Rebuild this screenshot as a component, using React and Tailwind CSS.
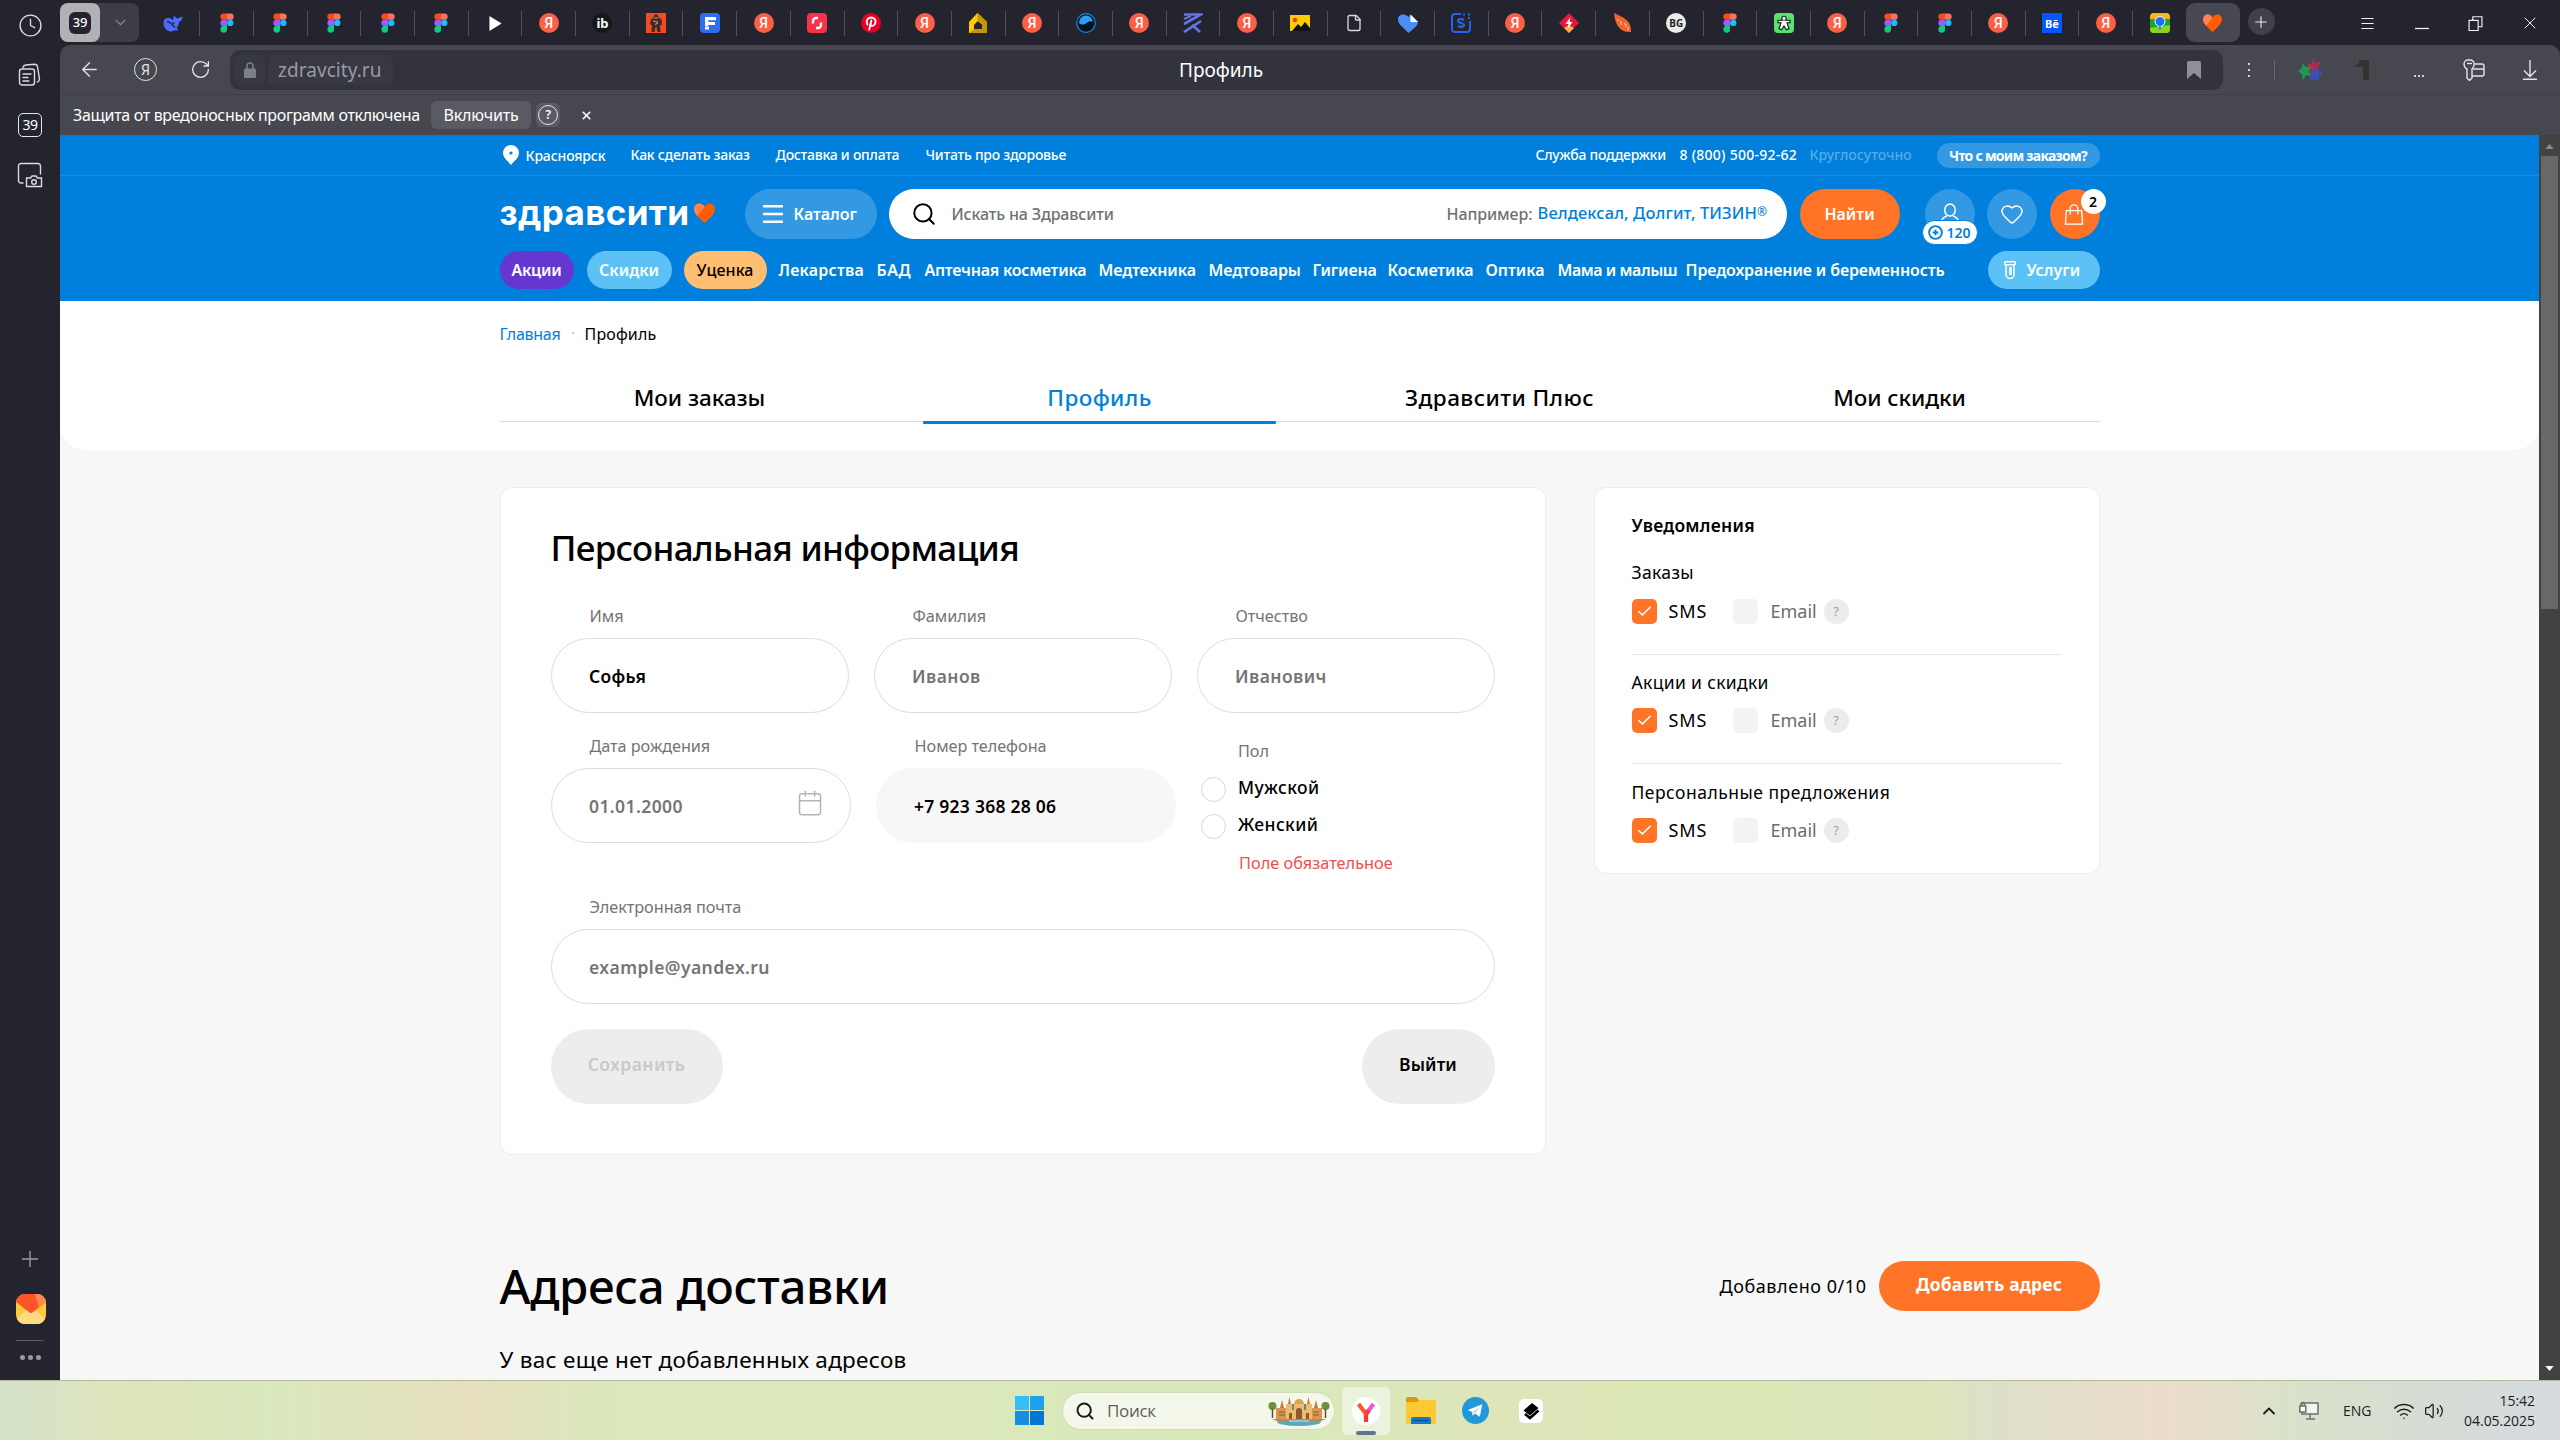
import React from "react";
import {
  Clock, ChevronDown, ChevronUp, ArrowLeft, RotateCw, Plus, X, Menu, Heart, User, Search,
  Calendar, Check, Wifi, Volume2, File,
} from "lucide-react";

/* ---------- tab icons ---------- */

const Figma = () => (
  <svg viewBox="0 0 14 20" className="h-[20px] w-[14px]">
    <path d="M3.5 0.5H7v6.3H3.5a3.15 3.15 0 0 1 0-6.3z" fill="#f24e1e" />
    <path d="M7 0.5h3.5a3.15 3.15 0 0 1 0 6.3H7z" fill="#ff7262" />
    <path d="M3.5 6.8H7v6.3H3.5a3.15 3.15 0 0 1 0-6.3z" fill="#a259ff" />
    <circle cx="10.3" cy="9.95" r="3.15" fill="#1abcfe" />
    <path d="M3.5 13.1H7v3.2a3.3 3.3 0 1 1-3.5-3.2z" fill="#0acf83" />
  </svg>
);

const Ya = () => (
  <div className="flex size-[20px] items-center justify-center rounded-full bg-[#fc5f48] font-['Roboto',sans-serif] text-[14px] leading-none font-medium text-white">
    Я
  </div>
);

const Badge = ({ className, children }) => (
  <div className={"flex size-[20px] items-center justify-center leading-none font-bold " + className}>{children}</div>
);

const HeartShape = ({ className, main, light }) => (
  <svg viewBox="0 0 24 22" className={className}>
    <path d="M12 22C7 17 .5 12.500.5 6.500.5 3 3 .5 6.200.5 8.800.5 11 2 12 4.500 13 2 15.200.5 17.800.5c3.200 0 5.700 2.500 5.700 6C23.500 12.500 17 17 12 22z" fill={main} />
    <path d="M4.200 14C2 11.800.5 9.500.5 6.500.5 3 3 .5 6.200.5 8.800.5 11 2 12 4.500z" fill={light} />
  </svg>
);

const Whale = () => (
  <svg viewBox="0 0 20 17" className="h-[17px] w-[20px]">
    <path d="M.5 8C.5 4.500 3 2.500 6 3c1.500.3 2.500 1.300 4 2 .5-2 .3-3.500 1.500-4.500C12 2 13 3 14.500 3.500 16 2.500 18 2.500 19.500 1.500 19.500 4.500 18 6.500 16 7c-.2 2.500-1 4.500-2.500 6l2 2c-1.500.8-3 .5-4 .2C9 16.800 6.500 16.800 4.500 15.500 1.800 14 .5 11 .5 8z" fill="#4d6bfe" />
    <path d="M4 6.500c3 .3 5.500 3 8 6" fill="none" stroke="#23242e" strokeWidth="1.300" /><circle cx="10.500" cy="8" r="1.100" fill="#23242e" />
  </svg>
);

const Play = () => (
  <svg viewBox="0 0 13 16" className="h-[15px] w-[13px]"><path d="M0 0l13 8-13 8z" fill="#fff" /></svg>
);

const Robot = () => (
  <svg viewBox="0 0 20 20" className="size-[20px]">
    <rect width="20" height="20" fill="#f54a23" />
    <path d="M8.500 1.500h3l1 3 3 2 .5 5-2 1 .5 6.500h-3l-1-5h-1l-1 5h-3L6 12.500 4 11l1-4.500 2.500-2z" fill="#3d2b25" />
    <path d="M8 5h4M7 8l5 1M9 11.500l3-1.500" stroke="#c9a15c" strokeWidth="1.200" />
  </svg>
);

const FBox = () => (
  <svg viewBox="0 0 20 20" className="size-[20px]">
    <rect width="20" height="20" rx="4" fill="#2f6df0" />
    <rect x="5" y="4" width="11" height="3.200" fill="#fff" /><rect x="5" y="4" width="3.300" height="9" fill="#fff" />
    <rect x="5" y="9" width="10" height="3" fill="#fff" /><rect x="5" y="13.500" width="4" height="3" fill="#fff" />
  </svg>
);

const RedLoop = () => (
  <svg viewBox="0 0 20 20" className="size-[20px]">
    <rect width="20" height="20" rx="4" fill="#fb3049" />
    <path d="M11 5H9a3 3 0 0 0-3 3v2.500M9 15h2a3 3 0 0 0 3-3V9.500" fill="none" stroke="#fff" strokeWidth="2.400" />
  </svg>
);

const Pin = () => (
  <svg viewBox="0 0 20 20" className="size-[20px]">
    <circle cx="10" cy="10" r="10" fill="#e60023" />
    <path d="M6.500 11.500C4.500 8 6.500 4.500 10.200 4.500c3 0 4.600 2 4.300 4.500-.3 2.500-2 4-3.700 3.800-1-.1-1.600-.8-1.600-.8M10.400 7.500L8.200 16.500" fill="none" stroke="#fff" strokeWidth="1.900" strokeLinecap="round" />
  </svg>
);

const House = () => (
  <svg viewBox="0 0 20 20" className="size-[20px]">
    <path d="M1 20V9l8.500-9 9.500 9v11h-4.500v-8l-4.700-4L6 12v8z" fill="#ffcc00" />
    <path d="M9.500 0l9.500 9v11H1l5-4h8v-5l-4.500-4z" fill="#c79500" />
  </svg>
);

const Wave = () => (
  <svg viewBox="0 0 20 20" className="size-[20px]">
    <circle cx="10" cy="10" r="9.300" fill="#06121f" stroke="#1489e6" strokeWidth="1.200" />
    <path d="M3 10a7 7 0 0 1 14-1c-3-2-5 0-7 1.500S5 12 3 10z" fill="#2b9df4" />
  </svg>
);

const Zed = () => (
  <svg viewBox="0 0 20 20" className="size-[20px]" fill="none" stroke="#6673e8" strokeWidth="2.600">
    <path d="M1 1.500h17L1 11" /><path d="M1 19L18 8" /><path d="M9 12l8 7" /><path d="M1 6l7-3" strokeWidth="2" />
  </svg>
);

const Picture = () => (
  <svg viewBox="0 0 20 16" className="h-[16px] w-[20px]">
    <rect width="20" height="16" fill="#ffcc00" />
    <path d="M2 16l6-7 3 3 4-5 5 6v3z" fill="#111" /><circle cx="5" cy="5" r="2.200" fill="#f33" />
  </svg>
);

const HeartFile = () => (
  <svg viewBox="0 0 20 19" className="h-[19px] w-[20px]">
    <path d="M10.500 19C6 14 0 10.500 0 5.500 0 2.500 2.200.5 5 .5c2.500 0 4 1 5.500 2.500L12.500.5 20 8c0 4-5 7-9.500 11z" fill="#4b8ef7" />
    <path d="M12.500.5L20 8h-7.500z" fill="#fff" />
  </svg>
);

const SBlue = () => (
  <svg viewBox="0 0 20 20" className="size-[20px]" fill="none" stroke="#2563eb" strokeWidth="2">
    <path d="M10 1H4a3 3 0 0 0-3 3v12a3 3 0 0 0 3 3h12a3 3 0 0 0 3-3V8" />
    <path d="M13 7c-2-1.500-6-1-6 1s6 2 6 4-4 2.500-6 1" strokeWidth="2.200" /><path d="M12 1.500h2M17 1.500h2M17 5h2" />
  </svg>
);

const Diamond = () => (
  <svg viewBox="0 0 20 20" className="size-[20px]">
    <path d="M10 0l10 10-10 10L0 10z" fill="#e5173f" /><path d="M10 20l-5-5 5-3 5 3z" fill="#ffb03a" />
    <path d="M11.500 4L6.500 11h3l-1 5 5-7h-3z" fill="#fff" />
  </svg>
);

const Feather = () => (
  <svg viewBox="0 0 20 20" className="size-[20px]">
    <path d="M1 0c8 4 18 7 17 19C8 20 2 13 1 0z" fill="#f2642c" />
    <path d="M4 6l1.500 2M8 8v4M11 11h2v3M15 14v3" stroke="#fff" strokeOpacity=".7" strokeWidth="1" fill="none" />
  </svg>
);

const Person = () => (
  <svg viewBox="0 0 20 20" className="size-[20px]">
    <rect width="20" height="20" rx="4" fill="#54e56d" />
    <path d="M10 3.200a2.200 2.200 0 0 1 1.300 4H16v2.600h-3l2 6-2.600 1L10 13l-2.400 3.800-2.600-1 2-6H4V7.200h4.700a2.200 2.200 0 0 1 1.300-4z" fill="#fff" stroke="#111" strokeWidth="1.100" />
  </svg>
);

const MapIcon = () => (
  <svg viewBox="0 0 20 20" className="size-[20px]">
    <rect width="20" height="20" rx="4" fill="#15a82b" /><path d="M0 6V4a4 4 0 0 1 4-4h12a4 4 0 0 1 4 4v2z" fill="#ffb319" />
    <path d="M0 15l20-3v4a4 4 0 0 1-4 4H4a4 4 0 0 1-4-4z" fill="#8bd61c" />
    <circle cx="10" cy="8.500" r="5" fill="#1a73ff" stroke="#fff" strokeWidth="1" /><path d="M10 13v4" stroke="#1a73ff" strokeWidth="1.500" />
  </svg>
);

const tabs = [
  Whale, Figma, Figma, Figma, Figma, Figma, Play, Ya,
  () => <Badge className="rounded-full bg-[#171717] text-[13px] text-white">ib</Badge>,
  Robot, FBox, Ya, RedLoop, Pin, Ya, House, Ya, Wave, Ya, Zed, Ya, Picture,
  () => <File className="h-[20px] w-[18px] text-[#d8d8dc]" strokeWidth={1.800} />,
  HeartFile, SBlue, Ya, Diamond, Feather,
  () => <Badge className="rounded-full bg-[#ececec] text-[10px] text-[#222]">BG</Badge>,
  Figma, Person, Ya, Figma, Figma, Ya,
  () => <Badge className="bg-[#0057ff] text-[11px] text-white">Bē</Badge>,
  Ya, MapIcon,
];

/* ---------- browser chrome ---------- */

function SideRail() {
  return (
    <aside className="flex h-full w-[60px] shrink-0 flex-col items-center bg-[#23242e] text-[#dcdce0]">
      <Clock className="mt-[13px] size-[25px]" strokeWidth={1.300} />
      <svg viewBox="0 0 24 24" className="mt-[25px] size-[24px]" fill="none" stroke="currentColor" strokeWidth="1.400" strokeLinejoin="round" strokeLinecap="round">
        <rect x="1.500" y="6" width="15" height="16" rx="2.500" /><path d="M5 4.500C5.200 3 6 2.300 7.500 2l9-.8c2 0 2.800 1 3 2.500L21.500 16c0 1.800-.7 2.500-2 3" /><path d="M5 11h8M5 14.500h5M5 18h6" />
      </svg>
      <div className="mt-[26px] flex size-[24px] items-center justify-center rounded-[5px] border-[1.5px] border-[#e6e6ea] font-['Noto_Sans',sans-serif] text-[14px] leading-none tracking-[-0.5px] text-white">39</div>
      <svg viewBox="0 0 26 26" className="mt-[25px] size-[26px]" fill="none" stroke="currentColor" strokeWidth="1.400" strokeLinejoin="round" strokeLinecap="round">
        <path d="M6 21H4a2.500 2.500 0 0 1-2.500-2.500V4A2.500 2.500 0 0 1 4 1.500h17A2.500 2.500 0 0 1 23.500 4v8" /><path d="M9.500 16h4l1.500-2h4l1.500 2h4v8.500h-15z" /><circle cx="17" cy="20" r="2.300" />
      </svg>
      <div className="flex-1" />
      <Plus className="size-[26px] text-[#9a9aa2]" strokeWidth={1.300} />
      <svg viewBox="0 0 30 30" className="mt-[22px] ml-px size-[30px]">
        <rect width="30" height="30" rx="9" fill="#ffcb3d" />
        <path d="M1 25l9.500-9.500L15 19l4.500-3.500L29 25a9 9 0 0 1-8 5H9a9 9 0 0 1-8-5z" fill="#ffdc80" />
        <path d="M0 8a9 9 0 0 1 9-8h12a9 9 0 0 1 9 8L16.500 18.500q-1.500 1-3 0z" fill="#ff5527" /><path d="M19 0h2a9 9 0 0 1 9 8l-7 5.500z" fill="#ff8a50" />
      </svg>
      <div className="mt-[16px] h-px w-[28px] bg-[#5b5c66]" />
      <div className="mt-[14px] mb-[20px] flex gap-[3px]">
        <i className="size-[5px] rounded-full bg-[#9a9aa2]" /><i className="size-[5px] rounded-full bg-[#9a9aa2]" /><i className="size-[5px] rounded-full bg-[#9a9aa2]" />
      </div>
    </aside>
  );
}

function TabStrip() {
  return (
    <div className="flex h-[45px] items-start bg-[#23242e] pt-[3px]">
      <div className="flex h-[39px] w-[79px] items-center rounded-[8px] bg-[#3c3d47]">
        <div className="flex h-full w-[40px] items-center justify-center rounded-[8px] bg-[#b1b1b6]">
          <div className="flex h-[22px] w-[22px] items-center justify-center rounded-[6px] bg-[#23242e] font-['Noto_Sans',sans-serif] text-[13px] leading-none font-medium tracking-[-0.3px] text-white">39</div>
        </div>
        <ChevronDown className="ml-[12px] size-[17px] text-[#8d8e97]" strokeWidth={1.800} />
      </div>
      <div className="ml-[7.600px] flex">
        {tabs.map((Icon, i) => (
          <div key={i} className="flex h-[40px] w-[53.700px] items-center">
            <div className="flex flex-1 justify-center"><Icon /></div>
            {i < tabs.length - 1 && <div className="h-[25px] w-px bg-[#50515b]" />}
          </div>
        ))}
      </div>
      <div className="-ml-px flex h-[39px] w-[54px] items-center justify-center rounded-[9px] bg-[#474852]">
        <HeartShape className="h-[18px] w-[21px]" main="#ff5c05" light="#ff8355" />
      </div>
      <div className="mt-[5px] ml-[8px] flex size-[27px] items-center justify-center rounded-full bg-[#3f404a]">
        <Plus className="size-[18px] text-[#ececf0]" strokeWidth={1.500} />
      </div>
      <div className="ml-auto flex h-[40px] items-center text-[#f0f0f2]">
        <Menu className="mr-[39px] size-[17px]" strokeWidth={1.500} />
        <svg viewBox="0 0 14 14" className="mr-[39px] size-[14px]"><path d="M0 12.500h14" stroke="currentColor" strokeWidth="1.300" /></svg>
        <svg viewBox="0 0 14 14" className="mr-[37px] size-[15px]" fill="none" stroke="currentColor" strokeWidth="1.100"><path d="M1 4h8.500v9.500H1zM4.500 4V.7H13V10H9.500" /></svg>
        <X className="mr-[20px] size-[20px]" strokeWidth={1.200} />
      </div>
    </div>
  );
}

function Toolbar() {
  return (
    <div className="flex h-[50px] items-center rounded-t-[10px] border-b border-[#3e3e48] bg-[#474750] text-[#e4e4e8]">
      <ArrowLeft className="ml-[18px] size-[23px]" strokeWidth={1.400} />
      <div className="ml-[33px] flex size-[23px] items-center justify-center rounded-full border-[1.500px] border-[#e4e4e8] font-['Roboto',sans-serif] text-[14px] leading-none">Я</div>
      <RotateCw className="ml-[33px] size-[21px]" strokeWidth={1.500} />
      <div className="ml-[19px] flex h-[40px] w-[1993px] items-center rounded-[10px] bg-[#33333d] pl-[5px] text-[19px]">
        <div className="flex h-[30px] w-[30px] items-center justify-center rounded-[6px] bg-[#373842]">
          <svg viewBox="0 0 12 16" className="h-[16px] w-[12px]"><path d="M3 7V4a3 3 0 0 1 6 0v3" fill="none" stroke="#7c8088" strokeWidth="1.500" /><rect y="6.500" width="12" height="9.500" rx="1.500" fill="#7c8088" /></svg>
        </div>
        <div className="ml-[3px] flex h-[30px] w-[125px] items-center rounded-[6px] bg-[#373842] pt-[2px] pl-[10px] tracking-[0.050px] text-[#9a9aa3]">zdravcity.ru</div>
        <div className="ml-[786px] w-[86px] pt-[2px] whitespace-nowrap text-white">Профиль</div>
        <svg viewBox="0 0 14 18" className="mr-[22px] ml-auto h-[18px] w-[14px]"><path d="M0 2a2 2 0 0 1 2-2h10a2 2 0 0 1 2 2v16l-7-6-7 6z" fill="#8f8f98" /></svg>
      </div>
      <div className="ml-[25px] flex flex-col gap-[4px]"><i className="size-[2px] bg-[#d0d0d4]" /><i className="size-[2px] bg-[#d0d0d4]" /><i className="size-[2px] bg-[#d0d0d4]" /></div>
      <div className="ml-[24px] h-[20px] w-px bg-[#66666f]" />
      <svg viewBox="0 0 26 26" className="ml-[23px] size-[26px]">
        <path d="M14 1l3 5 6-1-3 5 2 5-5-1-5 2V10L9 7l5-1z" fill="#b32b4b" /><path d="M4 6l4 4 5-1-2 5 2 5-5-1-3 5-1-6-4-3 4-3z" fill="#1d9a52" /><path d="M19 9l1 5 5 2-4 3v5l-4-2-5 2 1-6-2-4 5 0z" fill="#3a4fb5" />
      </svg>
      <svg viewBox="0 0 14 20" className="ml-[31px] h-[20px] w-[14px]"><path d="M4 0h10v20H8V7H0V5c3 0 4-1 4-5z" fill="#34342f" /></svg>
      <div className="mt-[13px] ml-[45px] flex gap-[2px]"><i className="size-[2px] bg-[#d0d0d4]" /><i className="size-[2px] bg-[#d0d0d4]" /><i className="size-[2px] bg-[#d0d0d4]" /></div>
      <svg viewBox="0 0 22 22" className="ml-[39px] size-[22px]" fill="none" stroke="currentColor" strokeWidth="1.400" strokeLinejoin="round">
        <path d="M1 5a4 4 0 0 1 4-4h3a4 4 0 0 1 3 5c0 2-1 3-2 4v9l-2.500 2.500L4 19v-9C2 9 1 7 1 5z" /><path d="M4 4.500h5" /><path d="M12 5h7a2 2 0 0 1 2 2v8a2 2 0 0 1-2 2H9M10 10h11" />
      </svg>
      <svg viewBox="0 0 16 20" className="ml-[37px] h-[20px] w-[16px]" fill="none" stroke="currentColor" strokeWidth="1.400"><path d="M8 0v16M2 10.500L8 16.500l6-6M1 19.200h14" /></svg>
    </div>
  );
}

function InfoBar() {
  return (
    <div className="flex h-[40px] items-center bg-[#474750] pl-[13px] text-[16px] tracking-[-0.320px] whitespace-nowrap text-white">
      <span className="w-[358px]">Защита от вредоносных программ отключена</span>
      <div className="flex h-[28px] w-[100px] items-center justify-center rounded-[6px] bg-[#5a5a63] tracking-[-0.180px]">Включить</div>
      <div className="ml-[5px] flex size-[24px] items-center justify-center rounded-[6px] bg-[#5a5a63]">
        <div className="flex size-[20px] items-center justify-center rounded-full border-[1.500px] border-[#e8e8ea] text-[12px] leading-none font-semibold">?</div>
      </div>
      <X className="ml-[20px] size-[13px]" strokeWidth={3} />
    </div>
  );
}

/* ---------- site ---------- */

function SiteHeader() {
  return (
    <header className="h-[166px] bg-[#007fdc] font-['Noto_Sans',sans-serif] text-white">
      <div className="h-[41px] border-b border-[#1a8be0]">
        <div className="mx-auto flex h-full w-[1600px] items-center pb-[2px] text-[14px] font-medium tracking-[-0.250px] whitespace-nowrap">
          <svg viewBox="0 0 16 20" className="mt-px ml-[3px] h-[20px] w-[16px]"><path d="M8 0a8 8 0 0 1 8 8c0 5-5 8-8 12C5 16 0 13 0 8a8 8 0 0 1 8-8z" fill="#fff" /><circle cx="8" cy="8" r="1.600" fill="#007fdc" /></svg>
          <span className="mt-[2px] ml-[7px] w-[105px] tracking-[-0.150px]">Красноярск</span>
          <span className="w-[145px]">Как сделать заказ</span>
          <span className="w-[150px]">Доставка и оплата</span>
          <span>Читать про здоровье</span>
          <span className="ml-auto w-[144px]">Служба поддержки</span>
          <span className="w-[130px] tracking-[0.260px]">8 (800) 500-92-62</span>
          <span className="w-[127px] tracking-[0px] text-[#56abe8]">Круглосуточно</span>
          <span className="mt-[3px] flex h-[25px] w-[163px] items-center justify-center rounded-full bg-[#3399e3] pb-px font-bold tracking-[-0.750px]">Что с моим заказом?</span>
        </div>
      </div>
      <div className="mx-auto mt-[13px] flex h-[50px] w-[1600px] items-center text-[16px] font-semibold whitespace-nowrap">
        <span className="w-[192px] pb-[4px] font-['Inter',sans-serif] text-[35px] leading-[46px] font-bold tracking-[0.350px]">здравсити</span>
        <HeartShape className="mb-[2px] h-[20px] w-[25px]" main="#ff5c05" light="#ff8355" />
        <div className="ml-[28px] flex h-[50px] w-[132px] items-center rounded-full bg-[#3399e3] pl-[18px]">
          <svg viewBox="0 0 20 18" className="h-[18px] w-[20px]"><path d="M0 1.300h20M0 9h20M0 16.700h20" stroke="#fff" strokeWidth="2.400" /></svg>
          <span className="ml-[11px] pb-px tracking-[-0.050px]">Каталог</span>
        </div>
        <div className="ml-[12px] flex h-[50px] w-[898px] items-center rounded-full bg-white pl-[22px] font-medium text-[#717171]">
          <Search className="size-[26px] text-black" strokeWidth={1.800} />
          <span className="ml-[15px] tracking-[-0.150px]">Искать на Здравсити</span>
          <span className="mr-[5px] ml-auto pb-px tracking-[-0.100px]">Например:</span>
          <span className="mr-[20px] w-[229px] pb-px text-[16.500px] tracking-[0.100px] text-[#007fdc]">Велдексал, Долгит, ТИЗИН<sup className="top-[-0.300em] text-[12px]">®</sup></span>
        </div>
        <button className="ml-[13px] h-[50px] w-[100px] rounded-full bg-[#ff7426]">Найти</button>
        <div className="relative ml-[25px] flex size-[50px] justify-center rounded-full bg-[#3399e3]">
          <svg viewBox="0 0 24 24" className="mt-[13px] size-[24px]" fill="none" stroke="#fff" strokeWidth="1.500"><ellipse cx="12" cy="8" rx="5.300" ry="6" /><path d="M3 20c1-3.500 4-5.500 6-6M21 20c-1-3.500-4-5.500-6-6" /></svg>
          <div className="absolute top-[31px] -left-[3px] flex h-[25px] w-[56px] items-center justify-center gap-[3px] rounded-full border border-[#007fdc] bg-white text-[14px] text-[#007fdc]">
            <svg viewBox="0 0 16 16" className="size-[15px]"><circle cx="8" cy="8" r="6.800" fill="none" stroke="#007fdc" strokeWidth="2" /><path d="M8 5v6M5 8h6" stroke="#007fdc" strokeWidth="2" /></svg>
            120
          </div>
        </div>
        <div className="ml-[12px] flex size-[50px] items-center justify-center rounded-full bg-[#3399e3]">
          <Heart className="size-[24px]" strokeWidth={1.500} />
        </div>
        <div className="relative ml-[13px] flex size-[50px] items-center justify-center rounded-full bg-[#ff7426]">
          <svg viewBox="0 0 20 22" className="mr-[2px] h-[21px] w-[20px]" fill="none" stroke="#fff" strokeWidth="1.400"><path d="M2 7h16l1 14H1z" /><path d="M6 11V5a4 4 0 0 1 8 0v6" /></svg>
          <div className="absolute top-0 -right-[6px] flex size-[25px] items-center justify-center rounded-full bg-white text-[14px] text-black">2</div>
        </div>
      </div>
      <div className="mx-auto mt-[12px] flex h-[38px] w-[1600px] items-center text-[16px] font-semibold whitespace-nowrap">
        <span className="flex h-[38px] w-[74px] items-center justify-center rounded-full bg-[#6637d0] tracking-[-0.200px]">Акции</span>
        <span className="ml-[13px] flex h-[38px] w-[85px] items-center justify-center rounded-full bg-[#5cc1f4]">Скидки</span>
        <span className="mr-[12px] ml-[12px] flex h-[38px] w-[83px] items-center justify-center rounded-full bg-[#ffbf73] font-medium tracking-[0.100px] text-black">Уценка</span>
        <div className="flex flex-1 items-center pb-px">
          <span className="w-[98px] tracking-[0.200px]">Лекарства</span>
          <span className="w-[48px] tracking-[0.500px]">БАД</span>
          <span className="w-[174px] tracking-[-0.250px]">Аптечная косметика</span>
          <span className="w-[110px] tracking-[-0.050px]">Медтехника</span>
          <span className="w-[104px] tracking-[-0.050px]">Медтовары</span>
          <span className="w-[75px] tracking-[-0.150px]">Гигиена</span>
          <span className="w-[98px] tracking-[-0.100px]">Косметика</span>
          <span className="w-[72px]">Оптика</span>
          <span className="w-[128px] tracking-[-0.450px]">Мама и малыш</span>
          <span className="tracking-[-0.120px]">Предохранение и беременность</span>
        </div>
        <span className="flex h-[38px] w-[112px] items-center rounded-full bg-[#5cc1f4] pl-[16px]">
          <svg viewBox="0 0 12 18" className="mr-[11px] h-[18px] w-[12px]" fill="none" stroke="#fff" strokeWidth="1.500"><rect x=".7" y=".7" width="10.600" height="3" rx="1" /><path d="M2 4v9.500a4 4 0 0 0 8 0V4" /><path d="M6.500 6v8" strokeWidth="2.500" /></svg>
          <span className="pb-px">Услуги</span>
        </span>
      </div>
    </header>
  );
}

const pageTabs = ["Мои заказы", "Профиль", "Здравсити Плюс", "Мои скидки"];

function PageTop() {
  return (
    <div className="h-[149px] rounded-b-[25px] bg-white">
      <div className="mx-auto w-[1600px]">
        <div className="flex h-[66px] items-center text-[16px]">
          <span className="w-[72px] tracking-[-0.300px] text-[#007fdc]">Главная</span>
          <span className="w-[13px] text-[12px] text-[#999]">·</span>
          <span className="tracking-[0.150px]">Профиль</span>
        </div>
        <div className="flex h-[55px] border-b border-[#dcdcdc]">
          {pageTabs.map((t, i) => (
            <div key={t} className={"flex h-[57px] w-[400px] flex-col items-center text-[22.500px] font-medium " + (i === 1 ? "text-[#007fdc]" : "text-black")}>
              <span className={"flex h-[54px] shrink-0 items-center pt-[7px] whitespace-nowrap " + (i === 2 ? "tracking-[0.440px]" : i === 1 ? "tracking-[0.400px]" : "tracking-[-0.050px]")}>{t}</span>
              {i === 1 && <div className="h-[3px] w-[353px] shrink-0 rounded-[1px] bg-[#007fdc]" />}
            </div>
          ))}
        </div>
      </div>
    </div>
  );
}

const Label = ({ children, className = "" }) => (
  <div className={"h-[24px] text-[16.250px] leading-[24px] tracking-[-0.050px] text-[#747474] " + className}>{children}</div>
);

function Field({ label, value, filled, muted, tail, className }) {
  return (
    <div className={className}>
      <Label className="pl-[39px]">{label}</Label>
      <div className={"mt-[10px] flex h-[75px] items-center rounded-full border pt-px pl-[37.500px] text-[17.500px] font-semibold " + (muted ? "border-[#f7f7f7] bg-[#f7f7f7] " : "border-[#dcdcdc] bg-white ") + (muted ? "tracking-[0.250px] text-black" : filled ? "tracking-[0.300px] text-black" : "tracking-[0.420px] text-[#757575]")}>
        {value}
        {tail}
      </div>
    </div>
  );
}

const Radio = ({ children }) => (
  <div className="flex h-[25px] items-center">
    <div className="size-[25px] rounded-full border border-[#d9d9d9] bg-white" />
    <span className="-mt-[4px] ml-[12.500px] text-[17.500px] font-medium tracking-[0.400px]">{children}</span>
  </div>
);

function PersonalCard() {
  return (
    <section className="h-[668px] w-[1046px] rounded-[12px] border border-[#ececec] bg-white px-[50px] pt-[38px]">
      <h2 className="h-[44px] text-[35px] leading-[44px] font-medium tracking-[-0.700px] whitespace-nowrap">Персональная информация</h2>
      <div className="mt-[34px] flex gap-[25px]">
        <Field className="w-[298px]" label="Имя" value="Софья" filled />
        <Field className="w-[298px]" label="Фамилия" value="Иванов" />
        <Field className="w-[298px]" label="Отчество" value="Иванович" />
      </div>
      <div className="mt-[21px] flex h-[109px] gap-[25px]">
        <Field className="w-[300px]" label="Дата рождения" value="01.01.2000"
          tail={<Calendar className="mr-[26px] mb-[6px] ml-auto size-[28px] text-[#b5b5b5]" strokeWidth={1.300} />} />
        <Field className="w-[300px]" label="Номер телефона" value="+7 923 368 28 06" filled muted />
        <div className="pt-[5px]">
          <Label className="pl-[37.500px]">Пол</Label>
          <div className="mt-[14px] flex flex-col gap-[12px]">
            <Radio>Мужской</Radio>
            <Radio>Женский</Radio>
          </div>
          <div className="mt-[12px] h-[24px] pl-[38.500px] text-[16.250px] leading-[24px] tracking-[0.050px] whitespace-nowrap text-[#ee4f4f]">Поле обязательное</div>
        </div>
      </div>
      <Field className="mt-[52px]" label="Электронная почта" value="example@yandex.ru" />
      <div className="mt-[25px] flex justify-between text-[17.500px] font-semibold">
        <button className="h-[75px] w-[172px] rounded-full bg-[#ededed] pb-[4px] tracking-[0.450px] text-[#c9c9c9]">Сохранить</button>
        <button className="h-[75px] w-[133px] rounded-full bg-[#ededed] pb-[4px] tracking-[0.100px] text-black">Выйти</button>
      </div>
    </section>
  );
}

const Channels = () => (
  <div className="flex h-[25px] items-center text-[18px]">
    <div className="flex size-[25px] items-center justify-center rounded-[5px] bg-[#ff7426]"><Check className="size-[17px] text-white" strokeWidth={2.300} /></div>
    <span className="-mt-px ml-[12px] w-[64px] tracking-[0.900px]">SMS</span>
    <div className="size-[25px] rounded-[5px] bg-[#f3f3f3]" />
    <span className="-mt-px ml-[13px] w-[53px] text-[#6b6b6b]">Email</span>
    <div className="flex size-[25px] items-center justify-center rounded-full bg-[#ececec] text-[13px] leading-none text-[#a3a3a3]">?</div>
  </div>
);

function NoticeCard() {
  return (
    <section className="h-[387px] w-[506px] rounded-[12px] border border-[#ececec] bg-white px-[37px] pt-[25px] text-[17.500px] leading-[24px] font-[450]">
      <h3 className="font-semibold tracking-[0.250px]">Уведомления</h3>
      <div className="border-b border-[#e8e8e8] pt-[23px] pb-[30px]">
        <div className="mb-[15px] tracking-[0.350px]">Заказы</div>
        <Channels />
      </div>
      <div className="border-b border-[#e8e8e8] pt-[15px] pb-[30px]">
        <div className="mb-[14px] tracking-[0.350px]">Акции и скидки</div>
        <Channels />
      </div>
      <div className="pt-[16px]">
        <div className="mb-[14px] tracking-[0.500px]">Персональные предложения</div>
        <Channels />
      </div>
    </section>
  );
}

function ScrollBar() {
  return (
    <div className="flex w-[21px] shrink-0 flex-col items-center bg-[#424242]">
      <svg viewBox="0 0 10 6" className="mt-[9px] h-[5px] w-[9px]"><path d="M5 0l5 6H0z" fill="#8a8a8a" /></svg>
      <div className="mt-[7px] h-[453px] w-[17px] bg-[#686868]" />
      <svg viewBox="0 0 10 6" className="mt-auto mb-[9px] h-[5px] w-[9px]"><path d="M0 0h10L5 6z" fill="#fff" /></svg>
    </div>
  );
}

function Site() {
  return (
    <div className="flex min-h-0 flex-1">
      <main className="flex-1 overflow-hidden bg-[#f7f7f7] font-['Noto_Sans',sans-serif] text-black">
        <SiteHeader />
        <PageTop />
        <div className="mx-auto mt-[37px] w-[1600px]">
          <div className="flex items-start justify-between">
            <PersonalCard />
            <NoticeCard />
          </div>
          <div className="mt-[101px] flex h-[60px] items-center">
            <h2 className="text-[47.500px] leading-[60px] font-medium tracking-[-0.350px] whitespace-nowrap">Адреса доставки</h2>
            <span className="ml-auto text-[18px] tracking-[0.550px]">Добавлено 0/10</span>
            <button className="ml-[12px] h-[50px] w-[221px] rounded-full bg-[#ff7426] pb-[3px] text-[17.500px] font-bold tracking-[0.150px] text-white">Добавить адрес</button>
          </div>
          <p className="mt-[28px] text-[22.500px] leading-[32px] tracking-[0.290px]">У вас еще нет добавленных адресов</p>
        </div>
      </main>
      <ScrollBar />
    </div>
  );
}

/* ---------- taskbar ---------- */

const Palace = () => (
  <svg viewBox="0 0 62 30" className="h-[30px] w-[62px]">
    <ellipse cx="31" cy="26" rx="22" ry="4" fill="#5aa9bd" />
    <rect x="8" y="12" width="46" height="11" fill="#d9964e" /><rect x="18" y="8" width="26" height="15" fill="#efb96f" />
    <path d="M12 12l2-8 2 8zM46 12l2-8 2 8zM20 8l1.500-7L23 8zM39 8l1.500-7L42 8z" fill="#c9743a" /><path d="M26 8a5 5 0 0 1 10 0z" fill="#e0a050" />
    <path d="M28 23v-8a3 3 0 0 1 6 0v8zM21 23v-6h3v6zM38 23v-6h3v6z" fill="#8c5a33" />
    <path d="M11 16h6M11 19h6M45 16h6M45 19h6" stroke="#8c5a33" strokeWidth="1.200" /><path d="M25 8v6M37 8v6" stroke="#33807e" strokeWidth="1.500" />
    <circle cx="4.500" cy="10" r="4" fill="#6f8f3a" /><circle cx="57.500" cy="10" r="4" fill="#6f8f3a" /><path d="M4.500 13v9M57.500 13v9" stroke="#6b4a2a" strokeWidth="1.500" />
    <path d="M4 23h54l-5 2H9z" fill="#b98a55" /><path d="M21 25h20" stroke="#9ad5de" strokeWidth="1.500" />
  </svg>
);

function Taskbar() {
  return (
    <footer className="flex h-[60px] items-center border-t border-[#b2b99d] bg-[linear-gradient(90deg,#d5e3cb_0px,#dfe3b9_130px,#d9e8bc_260px,#e6dfc0_470px,#dae8ba_620px,#d9e8ba_1300px,#dfe5b8_1570px,#d9e8b6_1680px,#dce5b9_1920px,#dedfca_2000px,#ebdccb_2170px,#d8e2ca_2300px,#d5dcd6_2450px,#d5dbe0_2560px)] font-['Open_Sans',sans-serif] text-[#1e1e1e]">
      <svg viewBox="0 0 29 29" className="ml-[1015px] size-[29px]">
        <path d="M0 0h14v14H0z" fill="#35bdf5" /><path d="M15 0h14v14H15z" fill="#1ea2ea" /><path d="M0 15h14v14H0z" fill="#148fe0" /><path d="M15 15h14v14H15z" fill="#0078d4" />
      </svg>
      <div className="ml-[18px] flex h-[38px] w-[273px] items-center rounded-full border border-[#d2dcb8] bg-[#f4f8ea] pl-[12px]">
        <Search className="size-[20px]" strokeWidth={2.400} />
        <span className="ml-[12px] text-[17px] tracking-[-0.300px] text-[#5c5f58]">Поиск</span>
        <div className="mr-[4px] ml-auto"><Palace /></div>
      </div>
      <div className="ml-[7px] flex h-[48px] w-[48px] flex-col items-center rounded-[5px] bg-[#ecf3dc] pt-[10px]">
        <svg viewBox="0 0 28 28" className="size-[28px]">
          <circle cx="14" cy="14" r="14" fill="#fff" /><path d="M14 25v-9" stroke="#f8382a" strokeWidth="4.200" /><path d="M14 17L6.500 7" stroke="#fb5b22" strokeWidth="4.200" /><path d="M14 17l7.500-10" stroke="#f05ad0" strokeWidth="4.200" /><path d="M14 17l3-4" stroke="#f53a50" strokeWidth="4.200" />
        </svg>
        <div className="mt-[6px] h-[4px] w-[20px] rounded-full bg-[#5f7690]" />
      </div>
      <svg viewBox="0 0 30 27" className="ml-[16px] h-[27px] w-[30px]">
        <path d="M0 2a2 2 0 0 1 2-2h8l3 3v4H0z" fill="#d99a0b" /><path d="M0 5h11l2-2h17v24H0z" fill="#ffc933" /><path d="M5 27v-5a2 2 0 0 1 2-2h16a2 2 0 0 1 2 2v5z" fill="#1179d0" /><path d="M8 23.500h14" stroke="#0a4e92" strokeWidth="1.200" />
      </svg>
      <svg viewBox="0 0 28 28" className="ml-[26px] size-[27px]">
        <circle cx="14" cy="14" r="14" fill="#2199d8" /><path d="M6 13.500L21 7.500 18.500 20.500l-5-3.500-2.500 2.500-.5-4z" fill="#fff" /><path d="M10.500 15.500l8-5.500-5 7" fill="#b9dcf0" />
      </svg>
      <svg viewBox="0 0 24 24" className="ml-[30px] size-[24px]">
        <rect width="24" height="24" rx="5" fill="#fff" /><path d="M4.500 11.500L13 4l6.500 5-8.500 7.500z" fill="#000" /><path d="M6 15l5 4 8.500-7.500" fill="none" stroke="#000" strokeWidth="2.600" />
      </svg>
      <ChevronUp className="ml-auto size-[20px]" strokeWidth={2.200} />
      <svg viewBox="0 0 20 20" className="ml-[20px] size-[20px]" fill="none" stroke="#6f6f6f" strokeWidth="1.500"><rect x="3" y="2" width="16" height="11" fill="#f4f4f0" /><path d="M11 13v4M7 18h9" /><rect x=".8" y="5" width="6" height="6" fill="#fff" /><path d="M2 5V2.500a2 2 0 0 1 3.500 0V5" /></svg>
      <span className="ml-[24px] w-[29px] text-[14px] tracking-[-0.050px]">ENG</span>
      <Wifi className="ml-[21px] size-[22px]" strokeWidth={1.700} />
      <Volume2 className="ml-[9px] size-[20px]" strokeWidth={1.500} />
      <div className="mr-[25px] ml-[19px] w-[72px] text-right text-[14px] leading-[20px] tracking-[-0.050px] whitespace-nowrap"><div>15:42</div><div>04.05.2025</div></div>
    </footer>
  );
}

export default function App() {
  return (
    <div className="flex h-[1440px] w-[2560px] flex-col overflow-hidden bg-[#23242e]">
      <div className="flex h-[1380px]">
        <SideRail />
        <div className="flex flex-1 flex-col font-['Noto_Sans',sans-serif]">
          <TabStrip />
          <Toolbar />
          <InfoBar />
          <Site />
        </div>
      </div>
      <Taskbar />
    </div>
  );
}
